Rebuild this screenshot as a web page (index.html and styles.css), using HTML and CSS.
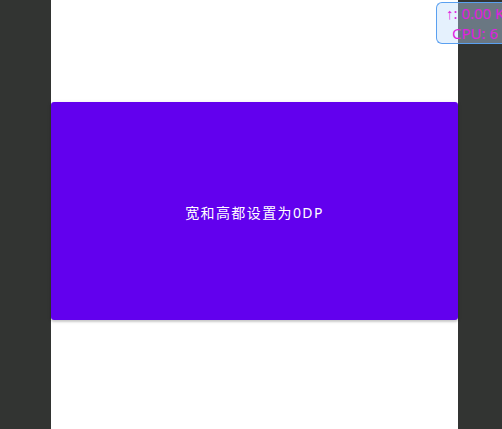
FILE: index.html
```html
<!DOCTYPE html>
<html>
<head>
<meta charset="utf-8">
<link rel="stylesheet" href="styles.css">
</head>
<body>
<div class="screen">
  <div class="phone">
    <div class="spacer-top"></div>
    <button class="btn">宽和高都设置为0DP</button>
  </div>
</div>
<div class="monitor">
  <div class="line">↑: 0.00 KB/s</div>
  <div class="line indent">CPU: 6 %</div>
</div>
</body>
</html>
```
FILE: styles.css
```css
html, body {
  margin: 0;
  padding: 0;
  width: 502px;
  height: 429px;
  overflow: hidden;
  background: #323432;
}
.screen {
  display: flex;
  padding-left: 51px;
  height: 429px;
}
.phone {
  width: 407px;
  height: 429px;
  background: #ffffff;
  display: flex;
  flex-direction: column;
}
.spacer-top {
  height: 102px;
}
.btn {
  height: 218px;
  width: 407px;
  border: none;
  border-radius: 3px;
  background: #6200ee;
  color: #ffffff;
  font-family: "Noto Sans", "Noto Sans CJK SC", sans-serif;
  font-size: 14px;
  font-weight: 400;
  letter-spacing: 1.4px;
  padding: 2px 0 0 0;
  margin: 0;
  box-shadow: 0 2px 2px rgba(0,0,0,0.14), 0 1px 4px rgba(0,0,0,0.12);
}
.monitor {
  position: absolute;
  left: 436px;
  top: 2px;
  right: 0;
  height: 42px;
  overflow: hidden;
  box-sizing: border-box;
  border: 1px solid #5aa0f0;
  border-right: none;
  border-radius: 6px 0 0 6px;
  background: rgba(190, 220, 250, 0.4);
  color: #e020e0;
  font-family: "Noto Sans", sans-serif;
  font-size: 15px;
  line-height: 20px;
  padding: 0 0 0 9px;
}
.line {
  white-space: nowrap;
}
.indent {
  padding-left: 6px;
}
```
